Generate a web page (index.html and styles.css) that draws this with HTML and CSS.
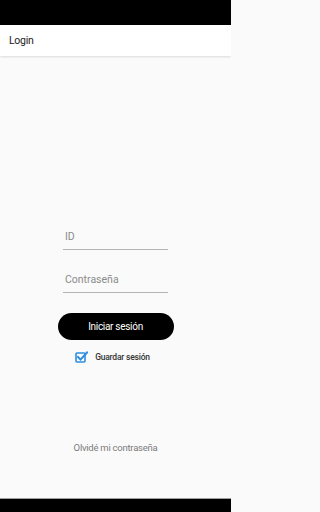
FILE: index.html
```html
<!DOCTYPE html>
<html lang="es">
<head>
<meta charset="utf-8">
<link rel="stylesheet" href="styles.css">
</head>
<body>
<div class="screen">
  <div class="status"></div>
  <header class="appbar">Login</header>
  <main class="content">
    <div class="field"><span class="placeholder">ID</span></div>
    <div class="field field-2"><span class="placeholder">Contraseña</span></div>
    <button class="btn">Iniciar sesión</button>
    <label class="remember">
      <svg class="check" width="13" height="12" viewBox="0 0 13 12">
        <rect x="1" y="2" width="9" height="9" rx="1" fill="none" stroke="#2b8fe0" stroke-width="1.6"/>
        <path d="M3 6 L5.5 8.6 L12 1.5" fill="none" stroke="#2b8fe0" stroke-width="2" stroke-linecap="square"/>
      </svg>
      <span class="remember-text">Guardar sesión</span>
    </label>
    <div class="forgot">Olvidé mi contraseña</div>
  </main>
  <div class="navbar"></div>
</div>
</body>
</html>
```
FILE: styles.css
```css
html, body {
  margin: 0;
  padding: 0;
}
body {
  background: #fafafa;
  font-family: Roboto, "Noto Sans", sans-serif;
}
.screen {
  width: 231px;
  height: 512px;
  display: flex;
  flex-direction: column;
  overflow: hidden;
}
.status {
  height: 25px;
  background: #000;
  flex: none;
}
.appbar {
  height: 31px;
  flex: none;
  background: #fff;
  box-shadow: 0 1px 2px rgba(0,0,0,0.12);
  display: flex;
  align-items: center;
  padding-left: 9px;
  font-size: 10.5px;
  letter-spacing: -0.3px;
  color: #212121;
  position: relative;
  z-index: 1;
}
.content {
  flex: 1;
  display: flex;
  flex-direction: column;
  align-items: center;
  padding-top: 172px;
}
.field {
  width: 105px;
  height: 19px;
  padding-top: 2px;
  border-bottom: 1px solid #b5b5b5;
  box-sizing: content-box;
}
.field-2 {
  margin-top: 21px;
}
.placeholder {
  display: block;
  font-size: 10.5px;
  line-height: 14px;
  color: #8a8a8a;
  padding-left: 2px;
}
.btn {
  margin-top: 20px;
  width: 116px;
  height: 27px;
  border: none;
  border-radius: 14px;
  background: #000;
  color: #fff;
  font-family: Roboto, "Noto Sans", sans-serif;
  font-size: 10px;
  letter-spacing: -0.3px;
  padding: 0;
}
.remember {
  margin-top: 10px;
  display: flex;
  align-items: center;
  gap: 7px;
  height: 13px;
  padding-right: 6px;
}
.check {
  display: block;
}
.remember-text {
  font-size: 8.5px;
  font-weight: 500;
  letter-spacing: -0.2px;
  color: #333;
}
.forgot {
  margin-top: 79px;
  font-size: 9.5px;
  letter-spacing: -0.25px;
  color: #7a7a7a;
}
.navbar {
  height: 13px;
  flex: none;
  background: #000;
  border-top: 1px solid #a0a0a0;
}
```
